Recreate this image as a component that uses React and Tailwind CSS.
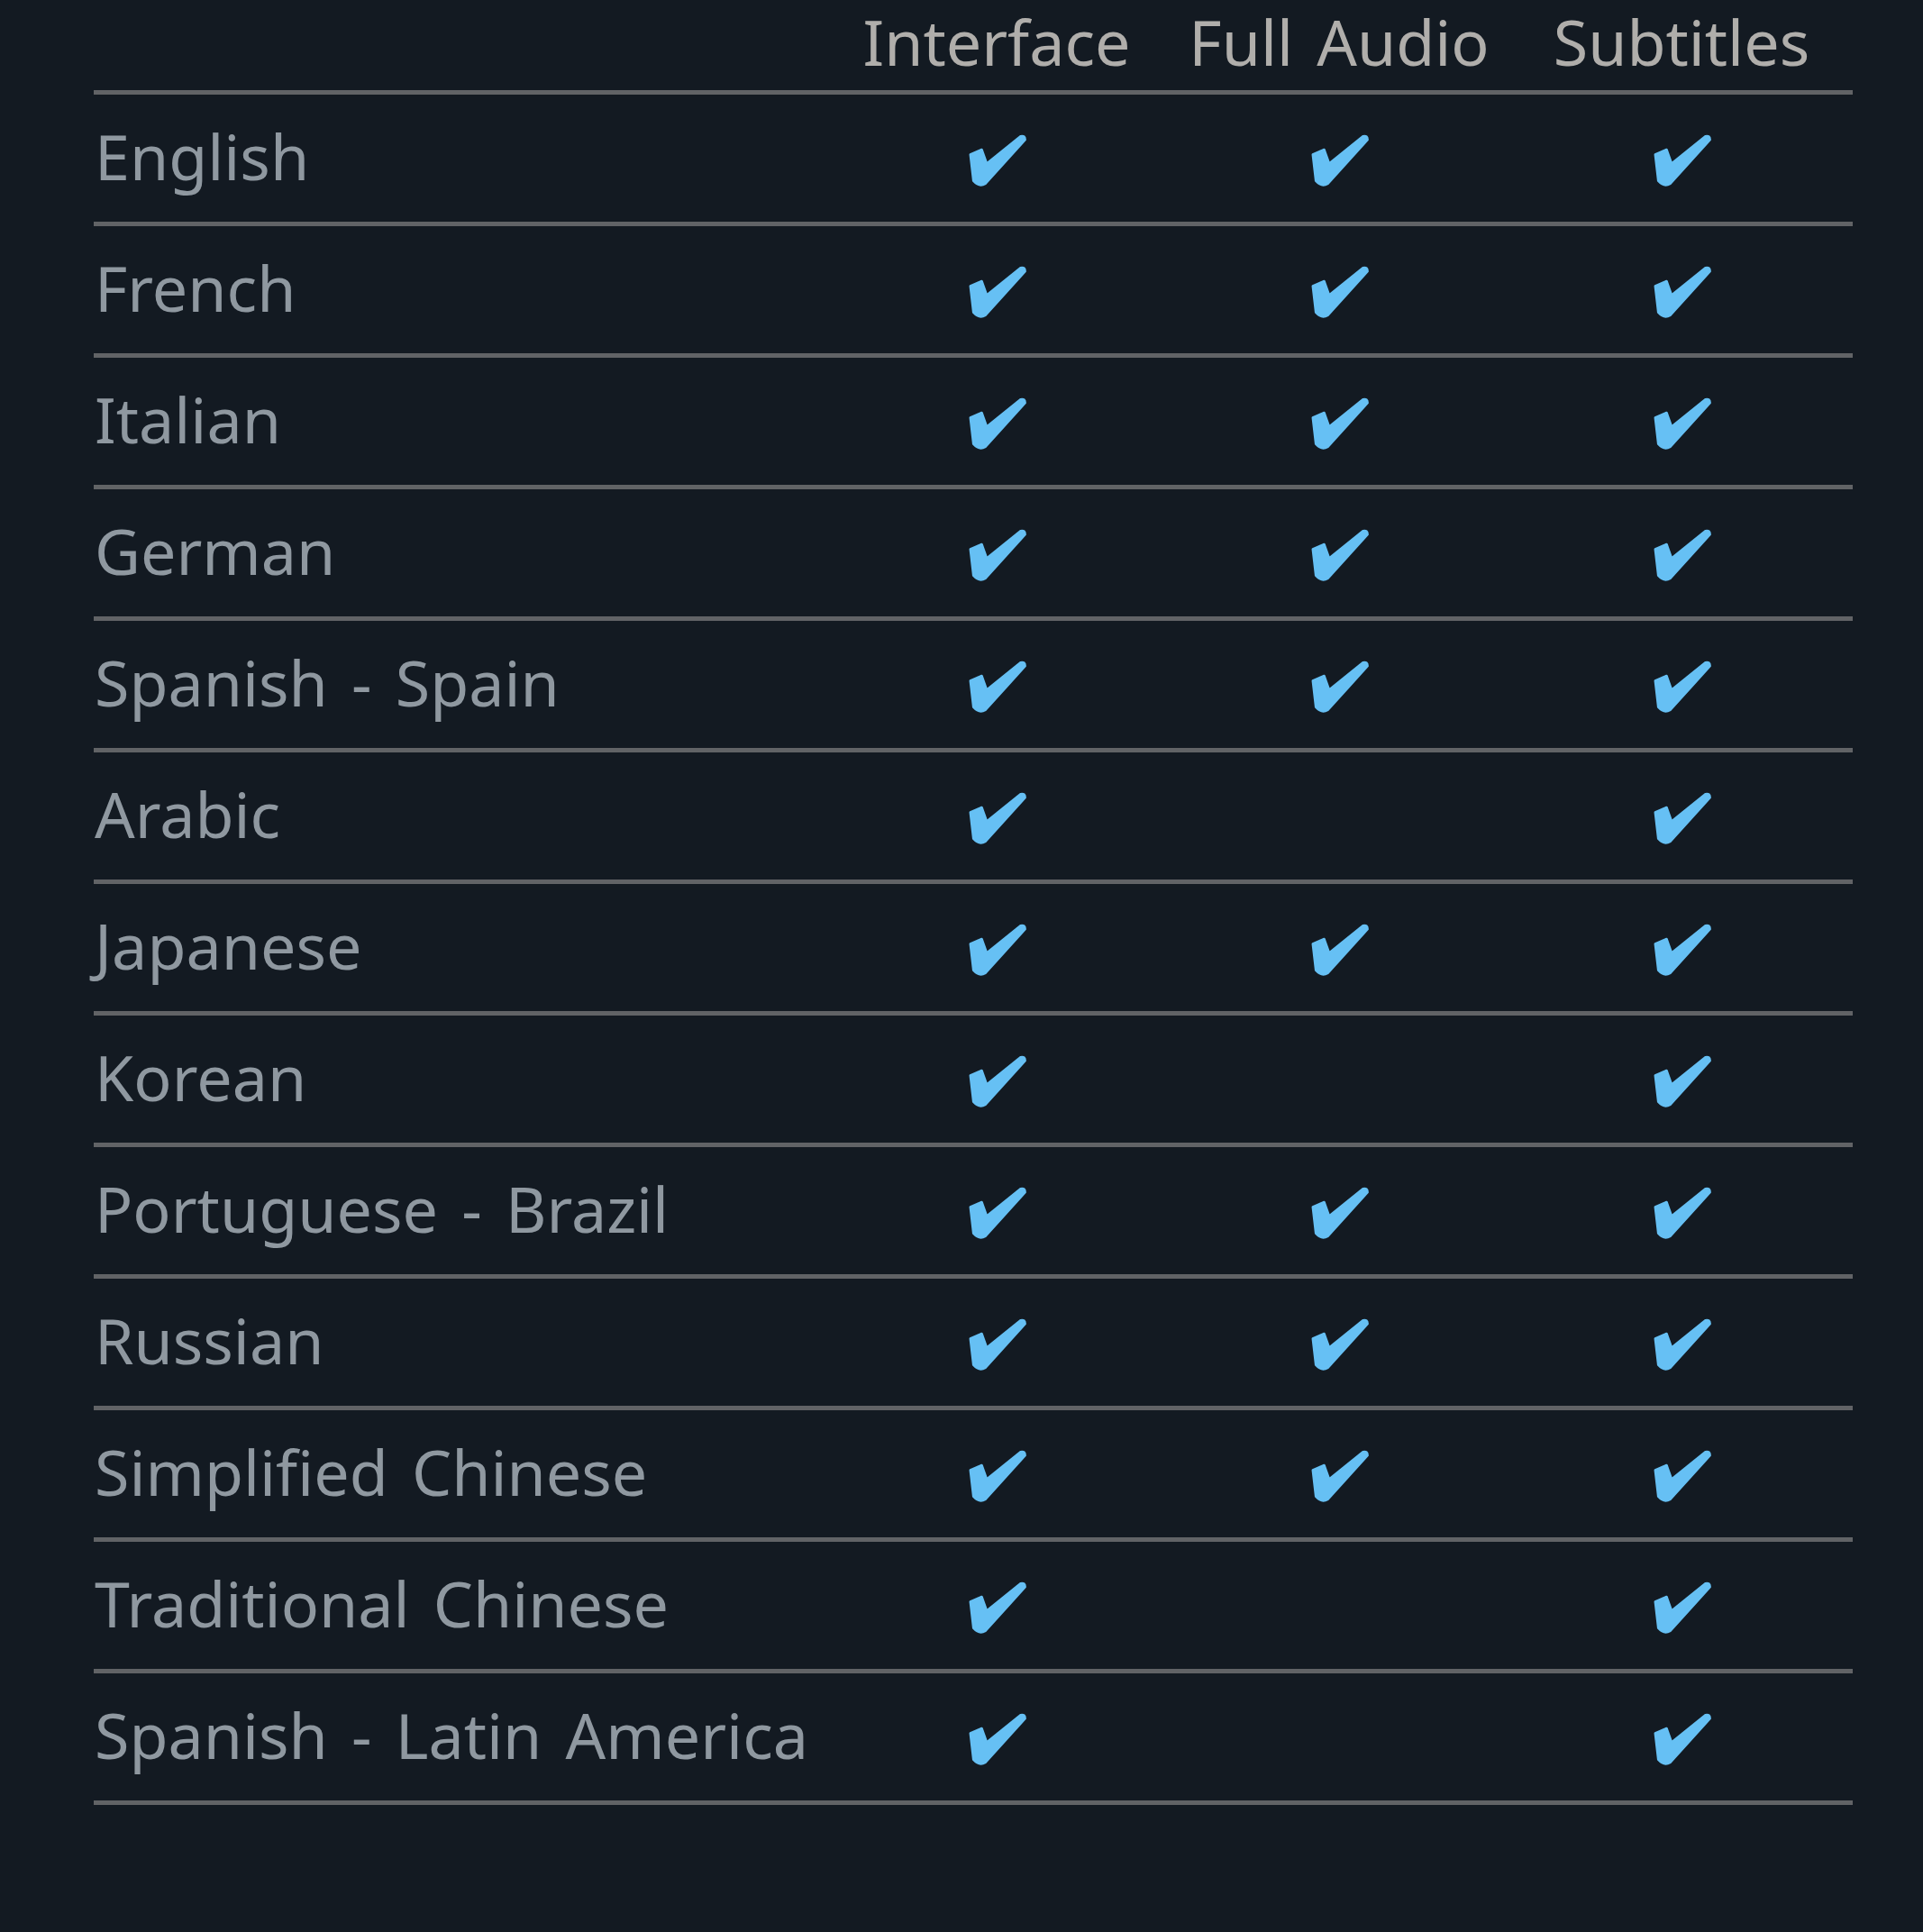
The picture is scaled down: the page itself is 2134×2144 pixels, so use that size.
import React from "react";

const rows = [
  ["English", true, true, true],
  ["French", true, true, true],
  ["Italian", true, true, true],
  ["German", true, true, true],
  ["Spanish - Spain", true, true, true],
  ["Arabic", true, false, true],
  ["Japanese", true, true, true],
  ["Korean", true, false, true],
  ["Portuguese - Brazil", true, true, true],
  ["Russian", true, true, true],
  ["Simplified Chinese", true, true, true],
  ["Traditional Chinese", true, false, true],
  ["Spanish - Latin America", true, false, true],
];

function Check({ on }) {
  return (
    <div className="flex items-center justify-center pt-[5px]">
      {on ? (
        <svg width="64" height="58" viewBox="0 -1 64 58" className="ml-[1px]">
          <path
            d="M1.8 21.5 L14.5 16 L20 31.5 L57.5 1.2 Q62.8 0 62.6 5.2 L18.5 54 Q11.5 58 5.2 50.8 Z"
            fill="#66c0f4"
            stroke="#66c0f4"
            strokeWidth="2.5"
            strokeLinejoin="round"
          />
        </svg>
      ) : null}
    </div>
  );
}

export default function App() {
  return (
    <div className="min-h-[2144px] w-full bg-[#131a22] font-['Noto_Sans',sans-serif] [word-spacing:8px]">
      <div className="ml-[104px] w-[1952px]">
        <div className="grid grid-cols-[812px_380px_380px_380px] h-[105px] border-b-[5px] border-[#616366] text-[70px] leading-none text-[#b0aeab]">
          <div />
          <div className="flex items-center justify-center pb-[8px]">Interface</div>
          <div className="flex items-center justify-center pb-[8px]">Full Audio</div>
          <div className="flex items-center justify-center pb-[8px]">Subtitles</div>
        </div>
        {rows.map(([name, a, b, c]) => (
          <div
            key={name}
            className="grid grid-cols-[812px_380px_380px_380px] h-[146px] border-b-[5px] border-[#616366]"
          >
            <div className="flex items-center text-[70px] leading-none text-[#8f98a0] pl-[1px] pb-[5px]">
              {name}
            </div>
            <Check on={a} />
            <Check on={b} />
            <Check on={c} />
          </div>
        ))}
      </div>
    </div>
  );
}
